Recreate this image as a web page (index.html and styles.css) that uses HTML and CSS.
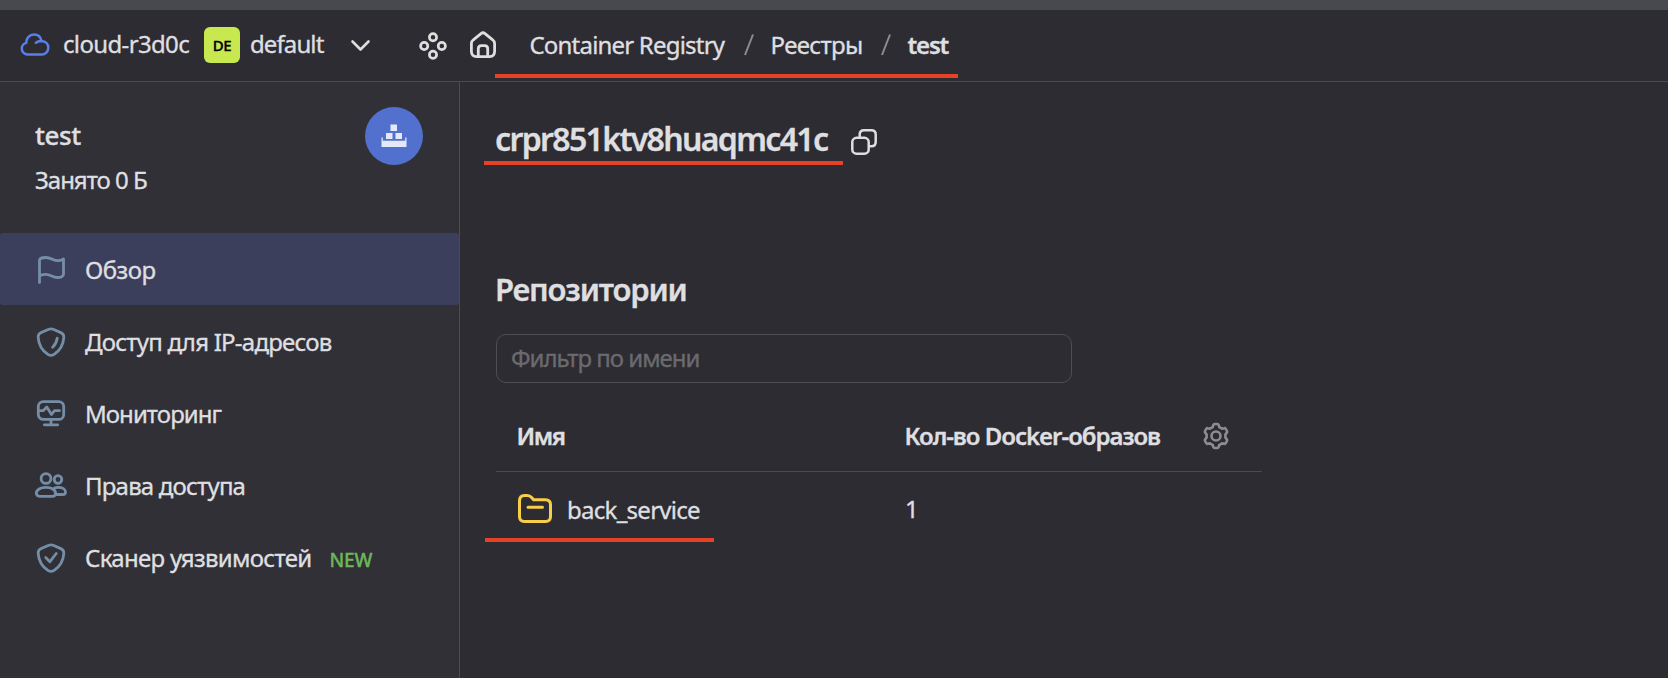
FILE: index.html
```html
<!DOCTYPE html>
<html lang="ru">
<head>
<meta charset="utf-8">
<title>Container Registry — test</title>
<link rel="stylesheet" href="styles.css">
</head>
<body>
<div class="window-strip"></div>
<header class="topbar">
  <svg class="cloud-icon" width="32" height="26" viewBox="0 0 32 26" fill="none" stroke="#5b7fe8" stroke-width="2.5" stroke-linecap="round" stroke-linejoin="round"><path d="M8.500 22.500h14a6.600 6.600 0 0 0 6.800-6.700c0-3.900-2.900-6.700-6.800-6.900C21.700 5.100 18.800 2.600 15 2.600c-4.500 0-7.800 3.400-7.800 8.300a5.900 5.900 0 0 0 1.300 11.600z M22.500 8.900c-2.700 0-4.500.7-5.700 1.900"/></svg>
  <span class="cloud-name">cloud-r3d0c</span>
  <span class="folder-badge">DE</span>
  <span class="folder-name">default</span>
  <svg class="chevron-icon" width="22" height="14" viewBox="0 0 22 14" fill="none" stroke="#dededf" stroke-width="2.600" stroke-linecap="round" stroke-linejoin="round"><path d="M2.500 2.500l8 8 8-8"/></svg>
  <svg class="services-icon" width="30" height="30" viewBox="0 0 30 30" fill="none" stroke="#dededf" stroke-width="2.700"><circle cx="15" cy="6.200" r="3.600"/><circle cx="6.200" cy="15" r="3.600"/><circle cx="23.800" cy="15" r="3.600"/><circle cx="15" cy="23.800" r="3.600"/></svg>
  <svg class="home-icon" width="30" height="30" viewBox="0 0 30 30" fill="none" stroke="#dededf" stroke-width="2.800" stroke-linejoin="round"><path d="M3.400 13.400c0-1.500.7-2.700 1.900-3.600l7.700-6.200c1.200-1 2.800-1 4 0l7.700 6.200c1.200.9 1.900 2.100 1.900 3.600v8.200c0 3-1.900 5-5 5H8.400c-3.100 0-5-2-5-5z"/><path d="M10.300 26.500v-7.800c0-1.900 1.200-3.100 3.100-3.100h3.200c1.900 0 3.100 1.200 3.100 3.100v7.800"/></svg>
  <nav class="breadcrumbs">
    <span class="crumb crumb-service">Container Registry</span>
    <svg class="slash" width="12" height="24" viewBox="0 0 12 24"><path d="M10 1.500L2 22" stroke="#8d8c90" stroke-width="2" fill="none"/></svg>
    <span class="crumb crumb-list">Реестры</span>
    <svg class="slash" width="12" height="24" viewBox="0 0 12 24"><path d="M10 1.500L2 22" stroke="#8d8c90" stroke-width="2" fill="none"/></svg>
    <span class="crumb crumb-current">test</span>
  </nav>
</header>
<div class="layout">
  <aside class="sidebar">
    <div class="registry">
      <div>
        <div class="registry-name">test</div>
        <div class="registry-size">Занято 0 Б</div>
      </div>
      <div class="registry-logo"><svg width="28" height="26" viewBox="0 0 28 26" fill="#e3e9f8"><path d="M10.500 1.500h6.500v6.500h-6.500z M6 10h6.500v6H6z M15.500 10H22v6h-6.500z M1.500 14.500h1.300v3.200h22.400v-3.200h1.300V24h-25z"/></svg></div>
    </div>
    <nav class="menu">
      <div class="item active"><svg class="item-icon" viewBox="0 0 32 32"><path d="M4.500 28.500V6.500C4.500 4.800 7 3.500 11 3.500c5 0 7.500 3.200 11.500 3.200 2.400 0 4.500-.8 6-1.700v15.600c0 1.600-2.700 2.900-6 2.900-5 0-7.500-3.200-11.500-3.200-3.500 0-6.500 1.200-6.500 2.500"/></svg><span class="t1">Обзор</span></div>
      <div class="item"><svg class="item-icon" viewBox="0 0 32 32"><path d="M13.800 3.300c1.500-.7 2.900-.7 4.400 0l7.600 3.300c2.200 1 3.200 2.600 3 5-.5 7-3.500 12.700-9.700 16.800-2.100 1.400-4.100 1.400-6.200 0C6.700 24.300 3.700 18.600 3.200 11.600c-.2-2.400.8-4 3-5z M22.200 12.200c-.5 3.700-1.900 6.500-4.500 9"/></svg><span class="t2">Доступ для IP-адресов</span></div>
      <div class="item"><svg class="item-icon" viewBox="0 0 32 32"><rect x="3.300" y="3.600" width="25.400" height="17.800" rx="5"/><path d="M4 12.700h4.200L11.800 9l4.700 7.500 3-3.800h5 M16 21.500v5 M9.300 26.800h13.400"/></svg><span class="t3">Мониторинг</span></div>
      <div class="item"><svg class="item-icon wide" viewBox="0 0 34 32"><circle cx="12" cy="8.500" r="4.900"/><circle cx="24" cy="9.500" r="3.800"/><path d="M12 17.300c5.500 0 9.600 2.500 9.600 6 0 1.900-1.300 3-3.400 3H5.700c-2 0-3.400-1.100-3.400-3 0-3.500 4.200-6 9.700-6z M20.300 18.300c1.100-.6 2.400-.9 3.900-.9 4.200 0 7.300 1.900 7.300 4.500 0 1.700-1 2.600-2.700 2.600h-6.700"/></svg><span class="t4">Права доступа</span></div>
      <div class="item"><svg class="item-icon" viewBox="0 0 32 32"><path d="M13.800 3.300c1.500-.7 2.900-.7 4.400 0l7.600 3.300c2.200 1 3.200 2.600 3 5-.5 7-3.500 12.700-9.700 16.800-2.100 1.400-4.100 1.400-6.200 0C6.700 24.300 3.700 18.600 3.200 11.600c-.2-2.400.8-4 3-5z M10.800 15.600l4 4.200 6.400-8.300"/></svg><span class="t5">Сканер уязвимостей</span><span class="new">NEW</span></div>
    </nav>
  </aside>
  <main class="content">
    <div class="title-row">
      <h1 class="registry-id">crpr851ktv8huaqmc41c</h1>
      <svg class="copy-icon" width="28" height="28" viewBox="0 0 28 28" fill="none" stroke="#dededf" stroke-width="2.500"><rect x="2.300" y="9.800" width="16.400" height="15.900" rx="4.300"/><path d="M9.700 9.500V6.600c0-2.600 1.700-4.300 4.300-4.300h7.400c2.600 0 4.300 1.700 4.300 4.300v7.300c0 2.600-1.700 4.300-4.300 4.300h-2.500"/></svg>
    </div>
    <h2 class="section-title">Репозитории</h2>
    <input class="filter" type="text" placeholder="Фильтр по имени">
    <div class="table">
      <div class="row head">
        <span class="col-name">Имя</span>
        <span class="col-count">Кол-во Docker-образов</span>
        <svg class="gear-icon" width="30" height="30" viewBox="0 0 30 30" fill="none" stroke="#8d8c90" stroke-width="2.600" stroke-linejoin="round"><circle cx="15" cy="15" r="4.500"/><path d="M11.700 6L12.400 3.900Q12.700 3 13.600 3H16.400Q17.300 3 17.600 3.900L18.300 6L21.100 7.600L23.300 7.200Q24.200 7 24.700 7.900L26 10.100Q26.500 11 25.900 11.700L24.400 13.400V16.600L25.900 18.300Q26.500 19 26 19.900L24.700 22.100Q24.200 23 23.300 22.800L21.100 22.400L18.300 24L17.600 26.100Q17.300 27 16.400 27H13.600Q12.700 27 12.400 26.100L11.700 24L8.900 22.400L6.700 22.800Q5.800 23 5.300 22.100L4 19.900Q3.500 19 4.100 18.300L5.600 16.600V13.400L4.100 11.700Q3.500 11 4 10.100L5.300 7.900Q5.800 7 6.700 7.200L8.900 7.600Z"/></svg>
      </div>
      <div class="row">
        <span class="col-name repo"><svg width="36" height="32" viewBox="0 0 36 32" fill="none" stroke="#f8ce46" stroke-width="3" stroke-linecap="round" stroke-linejoin="round"><path d="M1.500 8c0-3.500 1.800-5.500 5-5.500h2.600c2 0 3.300.6 4.500 2l2 2.300h11.900c3.200 0 5 2 5 5V23.500c0 3.200-1.800 5-5 5h-21c-3.200 0-5-1.800-5-5z M10 14.300h14.500"/></svg><span>back_service</span></span>
        <span class="col-count number">1</span>
      </div>
    </div>
  </main>
</div>
<div class="mark mark-path"></div>
<div class="mark mark-id"></div>
<div class="mark mark-repo"></div>
</body>
</html>
```
FILE: styles.css
```css
* { box-sizing: border-box; }
body {
  margin: 0;
  height: 678px;
  position: relative;
  display: flex;
  flex-direction: column;
  overflow: hidden;
  background: #2d2c32;
  color: #dfdfe0;
  font: 400 24px/32px "Noto Sans", sans-serif;
  -webkit-text-stroke: 0.35px currentColor;
  white-space: nowrap;
}
h1, h2 { margin: 0; }
svg { display: block; flex: none; }
.window-strip { height: 10px; background: #48494f; flex: none; }
.topbar {
  height: 72px;
  flex: none;
  display: flex;
  align-items: center;
  border-bottom: 1px solid #4b4a50;
  padding-left: 19px;
}
.cloud-icon { margin-top: -2px; }
.cloud-name { width: 141px; margin: -3px 0 0 12px; letter-spacing: -0.65px; }
.folder-badge {
  width: 36px;
  height: 36px;
  margin-top: -1px;
  line-height: 36px;
  border-radius: 6px;
  background: #c8e84f;
  color: #000;
  font-size: 15px;
  font-weight: 500;
  letter-spacing: -0.4px;
  text-align: center;
}
.folder-name { width: 101px; margin: -3px 0 0 10px; letter-spacing: -0.9px; }
.chevron-icon { width: 22px; margin-left: -1px; }
.services-icon { margin-left: 45.5px; }
.home-icon { margin-left: 20.5px; margin-top: -1px; }
.breadcrumbs { display: flex; align-items: center; margin: -1px 0 0 31.5px; }
.crumb-service { width: 213px; letter-spacing: -0.8px; }
.crumb-list { width: 109px; margin-left: 16px; letter-spacing: -0.64px; }
.crumb-current { margin-left: 16px; font-weight: 600; letter-spacing: -1.2px; }
.layout { flex: 1; display: flex; }
.sidebar { width: 460px; background: #313036; border-right: 1px solid #4b4a50; }
.registry {
  height: 151px;
  padding: 35px 36px 0 35px;
  display: flex;
  justify-content: space-between;
}
.registry-name { font-size: 26px; line-height: 36px; font-weight: 500; letter-spacing: -0.4px; }
.registry-size { margin-top: 11px; letter-spacing: -1.02px; }
.registry-logo {
  width: 58px;
  height: 58px;
  margin-top: -10px;
  border-radius: 50%;
  background: #5270cd;
  display: flex;
  align-items: center;
  justify-content: center;
}
.item { height: 72px; display: flex; align-items: center; padding: 2px 0 0 35px; }
.item.active { background: #3c3f5c; border-radius: 3px; }
.item-icon {
  width: 32px;
  height: 32px;
  margin-right: 18px;
  fill: none;
  stroke: #758ea8;
  stroke-width: 2.800;
  stroke-linecap: round;
  stroke-linejoin: round;
}
.item-icon.wide { width: 34px; margin-left: -1px; margin-right: 17px; }
.t1 { letter-spacing: -0.51px; }
.t2 { letter-spacing: -0.76px; }
.t3 { letter-spacing: -0.95px; }
.t4 { letter-spacing: -0.8px; }
.t5 { width: 244.5px; letter-spacing: -0.69px; }
.new { padding-top: 3px; font-size: 19px; font-weight: 500; color: #6db65a; letter-spacing: -0.16px; }
.content { flex: 1; padding: 36px 0 0 35px; }
.title-row { display: flex; height: 151px; }
.registry-id { width: 355px; padding-top: 1px; font-size: 32px; line-height: 40px; font-weight: 600; letter-spacing: -1.65px; }
.copy-icon { margin-top: 10px; }
.section-title { height: 65px; font-size: 31px; line-height: 40px; font-weight: 600; letter-spacing: -1.2px; }
.filter {
  display: block;
  width: 576px;
  height: 49px;
  margin: 0 0 0 1px;
  padding: 0 14px 2px;
  border: 1px solid #4f4e54;
  border-radius: 10px;
  background: transparent;
  color: inherit;
  font: inherit;
  letter-spacing: -1px;
  -webkit-text-stroke: inherit;
}
.filter::placeholder { color: #6b6a6f; opacity: 1; }
.table { width: 766px; margin: 17px 0 0 1px; }
.row { height: 72px; display: flex; align-items: center; padding-left: 20px; }
.head { border-bottom: 1px solid #4b4a50; font-weight: 600; letter-spacing: -1.03px; padding-top: 1px; }
.col-name { width: 389px; }
.head .col-name { width: 388.500px; padding-left: 0.5px; letter-spacing: -1.4px; }
.col-count { width: 296px; }
.repo { display: flex; align-items: center; padding: 3px 0 0 2px; letter-spacing: -0.73px; }
.repo svg { margin: -1px 13px 0 0; }
.number { padding-top: 1px; }
.mark { position: absolute; height: 4px; background: #e84226; }
.mark-path { left: 495px; top: 74px; width: 463px; }
.mark-id { left: 484px; top: 161px; width: 359px; }
.mark-repo { left: 485px; top: 538px; width: 229px; }
```
